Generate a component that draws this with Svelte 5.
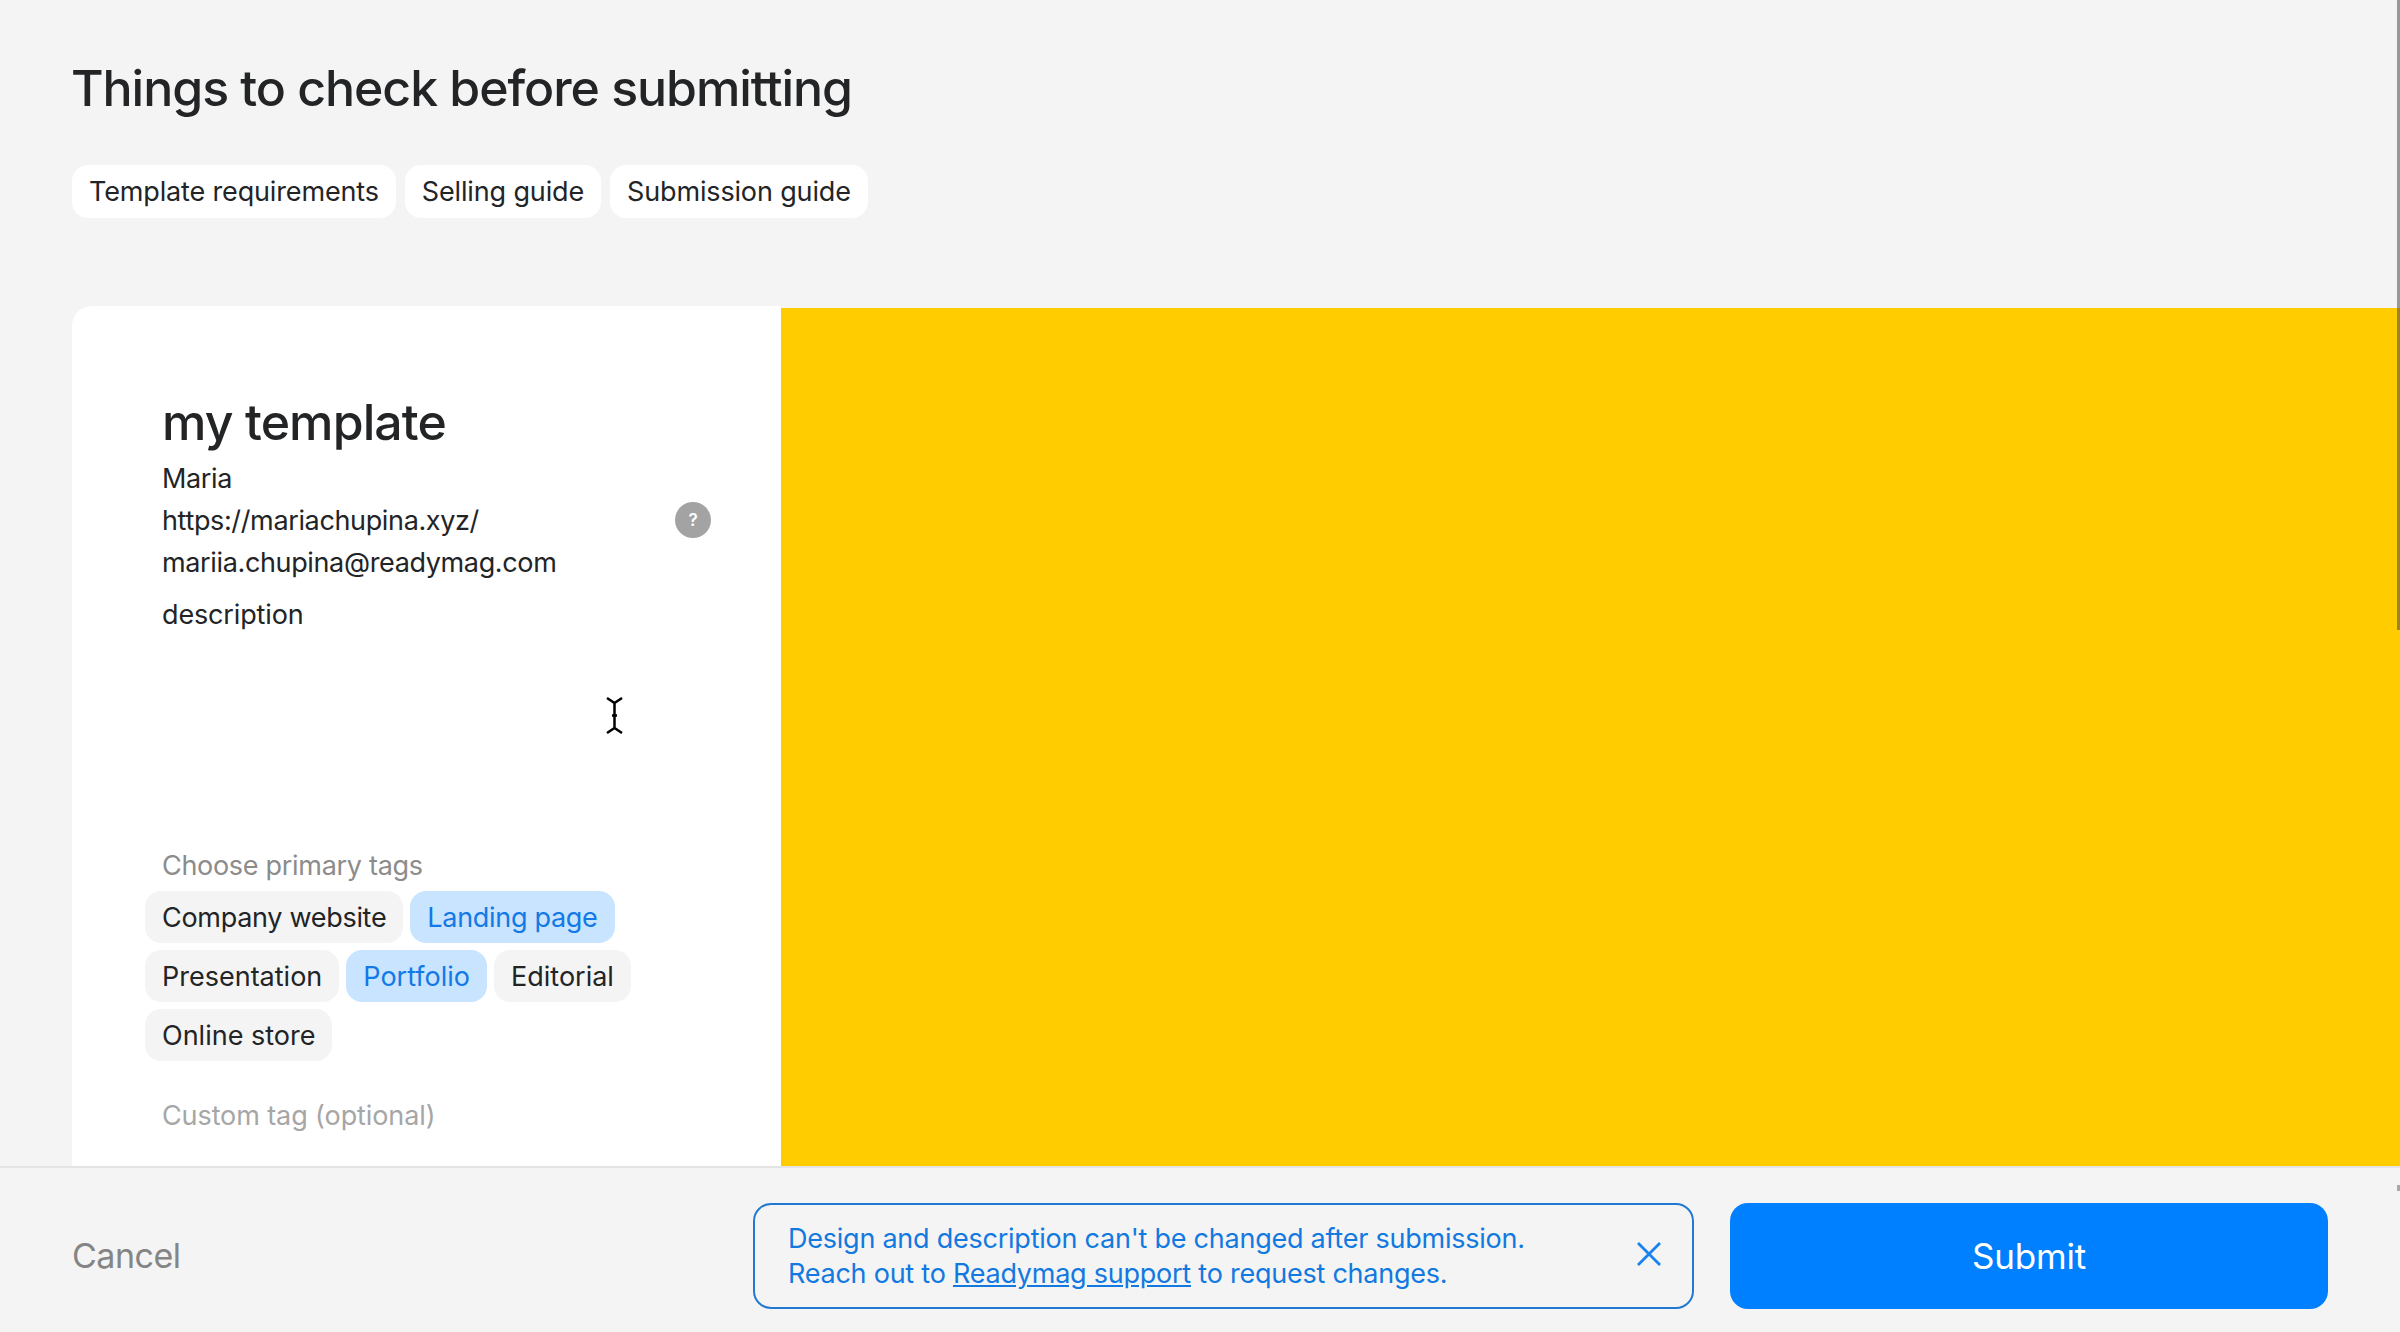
<script>
  const guides = ['Template requirements', 'Selling guide', 'Submission guide'];
  const tags = [
    { name: 'Company website', active: false, tight: true },
    { name: 'Landing page', active: true, tight: true },
    { name: 'Presentation', active: false },
    { name: 'Portfolio', active: true },
    { name: 'Editorial', active: false },
    { name: 'Online store', active: false }
  ];
</script>

<div class="page">
  <main class="content">
    <h1>Things to check before submitting</h1>
    <nav class="guides">
      {#each guides as guide}
        <a class="guide" href="#top">{guide}</a>
      {/each}
    </nav>

    <section class="panel">
      <aside class="card">
        <h2>my template</h2>
        <div class="meta">
          <div>Maria</div>
          <div class="url-row">
            <span>https://mariachupina.xyz/</span>
            <span class="help">?</span>
          </div>
          <div>mariia.chupina@readymag.com</div>
        </div>
        <p class="description">description</p>

        <div class="label">Choose primary tags</div>
        <div class="tags">
          {#each tags as tag}
            <span class="tag" class:active={tag.active} class:tight={tag.tight}>{tag.name}</span>
          {/each}
        </div>
        <div class="label custom">Custom tag (optional)</div>

        <svg class="cursor" width="17" height="37" viewBox="0 0 17 37" aria-hidden="true">
          <path d="M1 1l7.500 5 7.500-5M1 36l7.500-5 7.500 5M8.500 6v25M6 18.500h5" fill="none" stroke="#000" stroke-width="2.500"/>
        </svg>
      </aside>
      <div class="preview"></div>
    </section>
  </main>

  <footer class="footer">
    <button class="cancel">Cancel</button>
    <div class="actions">
      <div class="notice">
        <p>
          Design and description can't be changed after submission.<br />
          Reach out to <a href="#top">Readymag support</a> to request changes.
        </p>
        <svg class="close" width="26" height="26" viewBox="0 0 26 26" aria-hidden="true">
          <path d="M2 2l22 22M24 2L2 24" fill="none" stroke="#1a82ee" stroke-width="2.800"/>
        </svg>
      </div>
      <button class="submit">Submit</button>
    </div>
  </footer>

  <div class="scrollbar"></div>
  <div class="scroll-end"></div>
</div>

<style>
  :global(body) {
    margin: 0;
    background: #f4f4f4;
    overflow: hidden;
  }

  .page {
    position: relative;
    display: flex;
    flex-direction: column;
    height: 1332px;
    overflow: hidden;
    font-family: Inter, "Liberation Sans", sans-serif;
    color: #222426;
    background: #f4f4f4;
  }

  .content {
    flex: 1;
    min-height: 0;
    padding: 58px 0 0 72px;
    overflow: hidden;
  }

  h1 {
    margin: 0 0 0 -1px;
    font-size: 50px;
    line-height: 60px;
    font-weight: 500;
    letter-spacing: -1.05px;
  }

  .guides {
    display: flex;
    gap: 9px;
    margin-top: 47px;
  }

  .guide {
    display: block;
    height: 53px;
    line-height: 54px;
    padding: 0 17px;
    border-radius: 16px;
    background: #fff;
    color: inherit;
    font-size: 27px;
    letter-spacing: -0.15px;
    text-decoration: none;
  }

  .panel {
    display: flex;
    margin-top: 88px;
    height: 860px;
  }

  .card {
    position: relative;
    box-sizing: border-box;
    width: 709px;
    flex: none;
    padding: 86px 0 0 90px;
    background: #fff;
    border-radius: 20px 0 0 0;
  }

  h2 {
    margin: 0;
    font-size: 50px;
    line-height: 60px;
    font-weight: 500;
    letter-spacing: -0.9px;
  }

  .meta {
    margin-top: 6px;
    font-size: 27px;
    line-height: 42px;
    letter-spacing: -0.36px;
  }

  .url-row {
    display: flex;
    align-items: center;
    justify-content: space-between;
    width: 549px;
  }

  .help {
    width: 36px;
    height: 36px;
    margin-bottom: 3px;
    border-radius: 50%;
    background: #a3a3a3;
    color: #fff;
    font-size: 17px;
    font-weight: 600;
    line-height: 36px;
    letter-spacing: 0;
    text-align: center;
  }

  .description {
    margin: 10px 0 0;
    font-size: 27px;
    line-height: 42px;
    letter-spacing: -0.15px;
  }

  .label {
    margin-top: 209px;
    font-size: 27px;
    line-height: 42px;
    letter-spacing: -0.3px;
    color: #8c8c8c;
  }

  .label.custom {
    margin-top: 34px;
    letter-spacing: -0.1px;
    color: #a6a6a6;
  }

  .tags {
    display: flex;
    flex-wrap: wrap;
    gap: 7px 7px;
    width: 510px;
    margin: 4px 0 0 -17px;
  }

  .tag {
    height: 52px;
    line-height: 53px;
    padding: 0 17px;
    border-radius: 16px;
    background: #f4f4f4;
    font-size: 27px;
  }

  .tag.tight {
    letter-spacing: -0.3px;
  }

  .tag.active {
    background: #c8e4ff;
    color: #1279e6;
  }

  .cursor {
    position: absolute;
    left: 534px;
    top: 391px;
  }

  .preview {
    flex: 1;
    margin-top: 2px;
    background: #ffcc00;
  }

  .footer {
    display: flex;
    align-items: center;
    justify-content: space-between;
    box-sizing: border-box;
    height: 166px;
    padding: 12px 72px 0;
    border-top: 2px solid #e4e4e4;
    background: #f4f4f4;
  }

  button {
    border: none;
    font-family: inherit;
    cursor: pointer;
  }

  .cancel {
    padding: 0;
    background: none;
    color: #858585;
    font-size: 34px;
    letter-spacing: -0.5px;
    line-height: 44px;
  }

  .actions {
    display: flex;
    gap: 36px;
  }

  .notice {
    box-sizing: border-box;
    display: flex;
    align-items: center;
    justify-content: space-between;
    width: 941px;
    height: 106px;
    padding: 0 30px 0 33px;
    border: 2px solid #2379d2;
    border-radius: 18px;
    color: #1279e0;
    font-size: 27px;
    line-height: 35px;
    letter-spacing: -0.24px;
  }

  .notice p {
    margin: 0;
  }

  .notice a {
    color: inherit;
    text-decoration: underline;
  }

  .close {
    margin-bottom: 4px;
  }

  .submit {
    width: 598px;
    height: 106px;
    border-radius: 18px;
    background: #0080ff;
    color: #fff;
    font-size: 35px;
    letter-spacing: -0.2px;
  }

  .scrollbar {
    position: absolute;
    top: 0;
    right: 0;
    width: 3px;
    height: 630px;
    background: rgba(60, 60, 60, 0.5);
  }

  .scroll-end {
    position: absolute;
    top: 1185px;
    right: 0;
    width: 3px;
    height: 6px;
    background: #a8a8a8;
  }
</style>
